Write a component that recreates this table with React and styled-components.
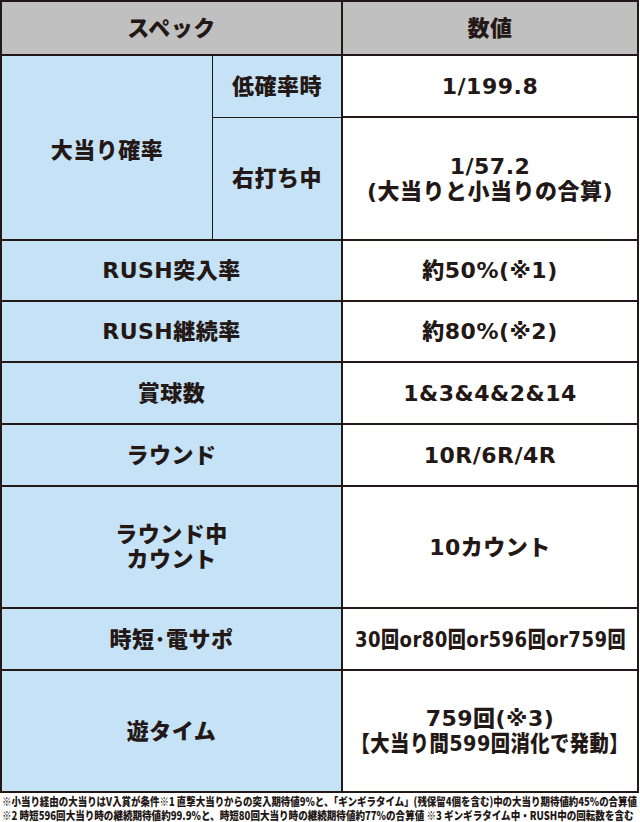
import React, { useLayoutEffect, useRef, useState } from 'react';
import styled, { createGlobalStyle } from 'styled-components';

const INK = '#231815';

const GlobalStyle = createGlobalStyle`
  *, *::before, *::after { box-sizing: border-box; }
  html, body { margin: 0; padding: 0; background: #ffffff; }
  body {
    font-family: "DejaVu Sans", "Noto Sans CJK JP", sans-serif;
    color: ${INK};
  }
`;

const Page = styled.div`
  width: 640px;
  overflow: hidden;
`;

const Table = styled.div`
  display: grid;
  grid-template-columns: 211px 130px 296px;
  grid-template-rows: 54px 62px 123px 61px 61px 62px 62px 122px 62px 122px;
  width: 639px;
  border-top: 2px solid ${INK};
  border-left: 2px solid ${INK};
`;

const tones = {
  head: '#c0c0c0',
  label: '#c6e2f6',
  value: '#ffffff',
};

const Cell = styled.div`
  grid-column: ${(p) => p.$col};
  grid-row: ${(p) => p.$row};
  background: ${(p) => tones[p.$tone]};
  border-right: ${(p) => (p.$thinRight ? 1 : 2)}px solid ${INK};
  border-bottom: ${(p) => (p.$thinBottom ? 1 : 2)}px solid ${INK};
  display: flex;
  flex-direction: column;
  align-items: center;
  justify-content: center;
  text-align: center;
  font-weight: 900;
  font-size: 22px;
  line-height: 25px;
  letter-spacing: 0.5px;
  padding-top: ${(p) => p.$pt || 0}px;
  white-space: nowrap;
`;

const Line = styled.span`
  display: inline-block;
  white-space: nowrap;
  transform-origin: ${(p) => (p.$origin === 'left' ? 'left center' : 'center center')};
`;

function FitLine({ width, origin, children }) {
  const ref = useRef(null);
  const [scale, setScale] = useState(1);
  useLayoutEffect(() => {
    const el = ref.current;
    if (!el) return;
    const natural = el.offsetWidth;
    if (natural > 0) setScale(width / natural);
  }, [width]);
  return (
    <Line ref={ref} $origin={origin} style={{ transform: `scaleX(${scale})` }}>
      {children}
    </Line>
  );
}

const Footer = styled.div`
  padding: 1px 0 0 2px;
  font-family: "Noto Sans CJK JP", sans-serif;
  font-weight: 900;
  font-size: 11.5px;
  line-height: 14px;
  letter-spacing: 0;
  color: ${INK};
`;

const FootRow = styled.div`
  height: 14px;
  white-space: nowrap;
`;

export default function App() {
  return (
    <>
      <GlobalStyle />
      <Page>
        <Table>
          <Cell $col="1 / 3" $row="1" $tone="head">スペック</Cell>
          <Cell $col="3" $row="1" $tone="head">数値</Cell>

          <Cell $col="1" $row="2 / 4" $tone="label" $thinRight $pt={6}>大当り確率</Cell>
          <Cell $col="2" $row="2" $tone="label" $thinBottom>低確率時</Cell>
          <Cell $col="3" $row="2" $tone="value">1/199.8</Cell>
          <Cell $col="2" $row="3" $tone="label">右打ち中</Cell>
          <Cell $col="3" $row="3" $tone="value">
            <Line>1/57.2</Line>
            <Line>(大当りと小当りの合算)</Line>
          </Cell>

          <Cell $col="1 / 3" $row="4" $tone="label">RUSH突入率</Cell>
          <Cell $col="3" $row="4" $tone="value">約50%(※1)</Cell>

          <Cell $col="1 / 3" $row="5" $tone="label">RUSH継続率</Cell>
          <Cell $col="3" $row="5" $tone="value">約80%(※2)</Cell>

          <Cell $col="1 / 3" $row="6" $tone="label">賞球数</Cell>
          <Cell $col="3" $row="6" $tone="value">1&amp;3&amp;4&amp;2&amp;14</Cell>

          <Cell $col="1 / 3" $row="7" $tone="label">ラウンド</Cell>
          <Cell $col="3" $row="7" $tone="value">10R/6R/4R</Cell>

          <Cell $col="1 / 3" $row="8" $tone="label">
            <Line>ラウンド中</Line>
            <Line>カウント</Line>
          </Cell>
          <Cell $col="3" $row="8" $tone="value">10カウント</Cell>

          <Cell $col="1 / 3" $row="9" $tone="label">時短･電サポ</Cell>
          <Cell $col="3" $row="9" $tone="value">
            <FitLine width={271}>30回or80回or596回or759回</FitLine>
          </Cell>

          <Cell $col="1 / 3" $row="10" $tone="label">遊タイム</Cell>
          <Cell $col="3" $row="10" $tone="value">
            <Line>759回(※3)</Line>
            <FitLine width={278}>【大当り間599回消化で発動】</FitLine>
          </Cell>
        </Table>
        <Footer>
          <FootRow>
            <FitLine width={635} origin="left">
              ※小当り経由の大当りはV入賞が条件※1 直撃大当りからの突入期待値9%と、「ギンギラタイム」(残保留4個を含む)中の大当り期待値約45%の合算値
            </FitLine>
          </FootRow>
          <FootRow>
            <FitLine width={632} origin="left">
              ※2 時短596回大当り時の継続期待値約99.9%と、時短80回大当り時の継続期待値約77%の合算値 ※3 ギンギラタイム中・RUSH中の回転数を含む
            </FitLine>
          </FootRow>
        </Footer>
      </Page>
    </>
  );
}
